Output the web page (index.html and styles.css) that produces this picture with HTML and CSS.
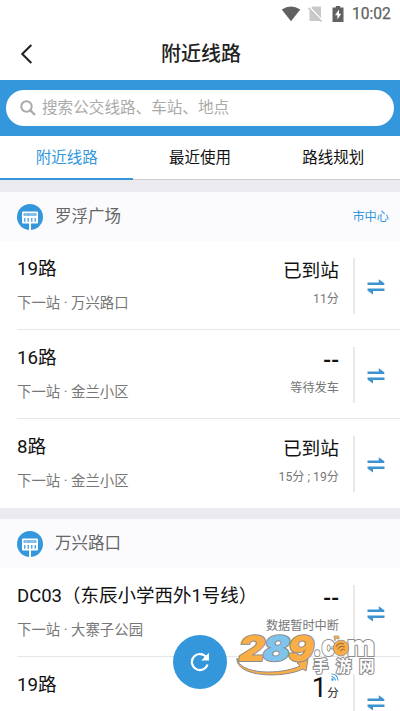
FILE: index.html
```
<!DOCTYPE html>
<html lang="zh-CN">
<head>
<meta charset="utf-8">
<title>附近线路</title>
<link rel="stylesheet" href="styles.css">
</head>
<body>
<svg class="defs" width="0" height="0">
  <symbol id="stop" viewBox="0 0 26 26">
    <circle cx="13" cy="13" r="13" fill="#3497db"/>
    <rect x="5" y="7.6" width="16" height="12" rx="1" fill="#fff"/>
    <rect x="6.600" y="9.400" width="12.800" height="2.200" fill="#3497db"/>
    <path d="M7.500 10.500h3.500M12 10.500h6.500" stroke="#a5d0ef" stroke-width=".8"/>
    <path d="M7.800 14v3.800M11.200 14v3.800M14.800 14v3.800M18.200 14v3.800" stroke="#3497db" stroke-width="1.200"/>
    <path d="M13 19v7" stroke="#fff" stroke-width="2"/>
  </symbol>
  <symbol id="swap" viewBox="0 0 18 16">
    <path d="M.5 3.500H11.800V.2L17.300 4.300V6H.5zM17.500 12H6V15.500L.5 11.600V9.500H17.500z" fill="#3c93d2"/>
  </symbol>
</svg>
<main class="screen">
  <div class="status">
    <svg width="20" height="16" viewBox="0 0 20 16"><path d="M.7 3.500Q10-2.600 19.300 3.500L10 15.300z" fill="#616161"/></svg>
    <svg class="sim" width="15" height="16" viewBox="0 0 15 16"><path d="M4.500.5H13V15H1.500V3.500z" fill="#c9c9c9"/><path d="M.5 1L14.500 15.500" stroke="#fff" stroke-width="2.600"/><path d="M.5 2L13.500 15.500" stroke="#bdbdbd" stroke-width="1.300"/></svg>
    <svg class="battery" width="12" height="16" viewBox="0 0 12 16"><path d="M3.800 0H8.200V1.500H11.500V16H.5V1.500H3.800z" fill="#616161"/><path d="M7 3.500L3 9.300H5.400V13.500L9.200 7.800H7z" fill="#fff"/></svg>
    <span class="clock">10:02</span>
  </div>
  <header class="titlebar">
    <svg class="back" width="13" height="20" viewBox="0 0 13 20"><path d="M11.300 1L2.300 10L11.300 19" fill="none" stroke="#222" stroke-width="2.100"/></svg>
    <h1>附近线路</h1>
  </header>
  <div class="searchbar">
    <div class="search">
      <svg width="16" height="16" viewBox="0 0 16 16" fill="none" stroke="#aaa"><circle cx="6.500" cy="6.500" r="5.200" stroke-width="2"/><path d="M10.400 10.400L15 15" stroke-width="2.300"/></svg>
      <span>搜索公交线路、车站、地点</span>
    </div>
  </div>
  <nav class="tabs">
    <a class="tab active">附近线路</a><a class="tab">最近使用</a><a class="tab">路线规划</a>
  </nav>

  <section>
    <div class="station"><svg class="stop"><use href="#stop"/></svg><h2>罗浮广场</h2><span class="tag">市中心</span></div>
    <div class="route">
      <div class="info"><div class="name">19路</div><div class="next">下一站 · 万兴路口</div></div>
      <div class="eta"><div class="state">已到站</div><div class="time">11分</div></div>
      <div class="swap"><svg><use href="#swap"/></svg></div>
    </div>
    <div class="route">
      <div class="info"><div class="name">16路</div><div class="next">下一站 · 金兰小区</div></div>
      <div class="eta"><div class="state none">--</div><div class="time">等待发车</div></div>
      <div class="swap"><svg><use href="#swap"/></svg></div>
    </div>
    <div class="route">
      <div class="info"><div class="name">8路</div><div class="next">下一站 · 金兰小区</div></div>
      <div class="eta"><div class="state">已到站</div><div class="time">15分 ; 19分</div></div>
      <div class="swap"><svg><use href="#swap"/></svg></div>
    </div>
  </section>

  <section>
    <div class="station"><svg class="stop"><use href="#stop"/></svg><h2>万兴路口</h2></div>
    <div class="route">
      <div class="info"><div class="name long">DC03（东辰小学西外1号线）</div><div class="next">下一站 · 大寨子公园</div></div>
      <div class="eta"><div class="state none">--</div><div class="time">数据暂时中断</div></div>
      <div class="swap"><svg><use href="#swap"/></svg></div>
    </div>
    <div class="route">
      <div class="info"><div class="name">19路</div></div>
      <div class="eta live"><span class="count">1</span><span class="unit"><svg width="8" height="8" viewBox="0 0 8 8" fill="none" stroke="#3d9bdd" stroke-width="1.100"><path d="M.5 1Q6.500 1 7 7.500M.5 3.500Q4 4 4.500 7.500"/><circle cx="1.500" cy="6.500" r=".7"/></svg>分</span></div>
      <div class="swap"><svg><use href="#swap"/></svg></div>
    </div>
  </section>

  <button class="refresh" aria-label="刷新">
    <svg width="20" height="20" viewBox="0 0 20 20"><path d="M16.500 5.500A8 8 0 1 0 17.500 12.500" fill="none" stroke="#fff" stroke-width="2.200"/><path d="M19 .8V8.600H11.200z" fill="#fff"/></svg>
  </button>

  <svg class="mark" width="142" height="42" viewBox="0 0 142 42">
    <path d="M2 24C4 41 46 41 65 32L62 29L73 25L71 37L68 35C47 45 0 43 2 24z" fill="#fbae45" stroke="#8c8c8c" stroke-width="1"/>
    <g class="digits" transform="translate(0 27) skewX(-11)">
      <text x="2" y="0" textLength="26" lengthAdjust="spacingAndGlyphs" fill="#fbae45">2</text>
      <text x="51" y="0" textLength="26" lengthAdjust="spacingAndGlyphs" fill="#fbae45">9</text>
      <text x="26" y="0" textLength="27" lengthAdjust="spacingAndGlyphs" fill="#7fc4ec">8</text>
    </g>
    <g class="domain">
      <text x="78" y="22" textLength="22" lengthAdjust="spacingAndGlyphs">.c</text>
      <text x="112" y="22" textLength="28" lengthAdjust="spacingAndGlyphs">m</text>
    </g>
    <circle cx="106" cy="14" r="7.800" fill="#fbae45" stroke="#8c8c8c" stroke-width=".8"/>
    <path d="M99 4Q98 1 101 2Q105 1 104 5L101 4.500L100 7z" fill="#fbae45" stroke="#8c8c8c" stroke-width=".6"/>
    <path d="M101 13Q103 8 109 10M103 15.500Q104 11 110 13M105.500 17.500Q107 14 110 16" fill="none" stroke="#a0743c" stroke-width="1.100"/>
    <g class="cn"><text x="78" y="38">手</text><text x="101" y="38">游</text><text x="124" y="38">网</text></g>
  </svg>
</main>
</body>
</html>
```
FILE: styles.css
```
* { box-sizing: border-box; }
body {
  margin: 0;
  background: #fff;
  color: #111;
  font-family: Roboto, "Noto Sans CJK SC", sans-serif;
}
h1, h2 { margin: 0; font-weight: 400; }
svg { display: block; }
.defs { position: absolute; }
.screen {
  position: relative;
  width: 400px;
  height: 711px;
  overflow: hidden;
}
.status {
  display: flex;
  align-items: center;
  justify-content: flex-end;
  height: 28px;
  padding-right: 9px;
}
.sim { margin-left: 7px; }
.battery { margin-left: 9px; }
.clock {
  margin-left: 8px;
  width: 39px;
  color: #616161;
  font-size: 15.6px;
  font-weight: 400;
  -webkit-text-stroke: .25px #616161;
  white-space: nowrap;
}
.titlebar {
  display: flex;
  align-items: center;
  height: 52px;
  padding: 0 20px;
}
.titlebar h1 {
  flex: 1;
  padding-right: 11px;
  color: #222;
  font-size: 20px;
  font-weight: 500;
  line-height: 54px;
  text-align: center;
}
.searchbar {
  height: 56px;
  padding: 10px 6px;
  background: #3497db;
}
.search {
  display: flex;
  align-items: center;
  gap: 6px;
  height: 36px;
  padding-left: 14px;
  border-radius: 18px;
  background: #fff;
  color: #aaa;
  font-size: 15.6px;
  line-height: 35px;
}
.tabs {
  display: flex;
  height: 44px;
  border-bottom: 1px solid #ccc;
}
.tab {
  flex: 1;
  height: 44px;
  font-size: 15.5px;
  line-height: 44px;
  text-align: center;
}
.tab.active {
  color: #3497db;
  border-bottom: 2px solid #3497db;
}
section { border-top: 12px solid #ebeaf0; }
section + section { border-top-width: 11px; }
.station {
  display: flex;
  align-items: center;
  height: 49px;
  padding: 0 11px 0 17px;
  background: #fbfbfe;
}
.stop { width: 26px; height: 26px; }
.station h2 {
  flex: 1;
  margin-left: 12px;
  color: #666;
  font-size: 16.5px;
  line-height: 48px;
}
.tag { margin-top: -2px; color: #3497db; font-size: 12.2px; }
.route {
  display: flex;
  height: 89px;
  margin-left: 17px;
  border-bottom: 1px solid #e6e6e6;
}
.route:last-child { border-bottom: 0; }
.info { flex: 1; min-width: 0; white-space: nowrap; }
.name {
  padding-top: 14px;
  font-size: 18.7px;
  line-height: 28px;
}
.name.long { font-size: 18.5px; }
.next {
  margin-top: 10px;
  color: #777;
  font-size: 14.4px;
  line-height: 22px;
}
.eta {
  flex: none;
  width: 76px;
  text-align: right;
  white-space: nowrap;
}
.state {
  padding-top: 16px;
  font-size: 18.7px;
  line-height: 28px;
}
.state.none {
  font-size: 23px;
  font-weight: 500;
  line-height: 30px;
}
.time {
  margin-top: 4px;
  color: #777;
  font-size: 12.2px;
  line-height: 20px;
}
.state.none + .time { margin-top: 2px; }
.swap {
  display: flex;
  flex: none;
  align-items: center;
  width: 47px;
  height: 56px;
  margin: 17px 0 0 14px;
  padding-left: 12px;
  border-left: 2px solid #e9e9e9;
}
.swap svg { width: 18px; height: 16px; margin-top: 2px; }
.live {
  display: flex;
  justify-content: flex-end;
  padding-top: 15px;
}
.count { font-size: 27px; line-height: 32px; }
.unit {
  display: flex;
  flex-direction: column;
  align-items: center;
  font-size: 11.5px;
  line-height: 17px;
}
.unit svg { margin: 1px 0 4px 4px; }
.refresh {
  position: absolute;
  left: 173px;
  top: 635px;
  display: flex;
  align-items: center;
  justify-content: center;
  width: 54px;
  height: 54px;
  padding: 0;
  border: 0;
  border-radius: 50%;
  background: #3497db;
}
.mark { position: absolute; left: 235px; top: 634px; overflow: visible; }
.mark text { paint-order: stroke; stroke: #8c8c8c; stroke-width: 2px; }
.digits { font: 900 35px Inter, sans-serif; }
.domain { font: 900 29px Inter, sans-serif; fill: #fff; }
.cn { font: 700 15.5px "Noto Sans CJK SC", sans-serif; fill: #fff; }
```
